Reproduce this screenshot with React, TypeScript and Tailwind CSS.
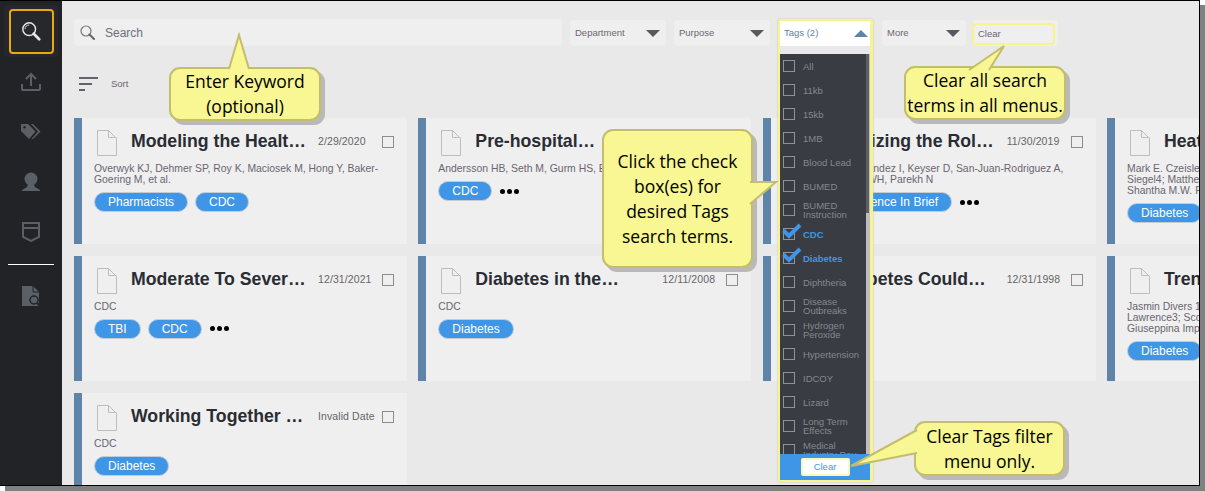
import React from "react";

const FONT = "font-['Liberation_Sans',Arial,sans-serif]";

function DocIcon() {
  return (
    <svg width="20" height="26" viewBox="0 0 20 26" className="ml-[3px] shrink-0">
      <path d="M.5.5H11.5L19.5 8.5V25.5H.5Z M11.5.5V7.5H19.5" fill="none" stroke="#bdbdbd" strokeWidth="1" />
    </svg>
  );
}

function Pill({ children, className = "" }: { children: React.ReactNode; className?: string }) {
  return (
    <span className={`inline-flex h-[20px] items-center rounded-full border border-[#c4ccd4] bg-[#3f96e6] px-[13px] text-[12px] text-white whitespace-nowrap ${className}`}>
      {children}
    </span>
  );
}

function Dots() {
  return (
    <span className="ml-[1px] flex gap-[2px]">
      <i className="block h-[5px] w-[5px] rounded-full bg-black" />
      <i className="block h-[5px] w-[5px] rounded-full bg-black" />
      <i className="block h-[5px] w-[5px] rounded-full bg-black" />
    </span>
  );
}

type CardData = { title: string; date: string; meta: string[]; pills: string[]; dots?: boolean };

function Card({ title, date, meta, pills, dots }: CardData) {
  return (
    <div className="flex h-[125.5px] w-[333px] shrink-0 border-l-[8px] border-[#5f84a9] bg-[#efefef] pl-[12px] pr-[12px] pt-[12px]">
      <div className="w-full min-w-0">
        <div className="flex h-[26px] items-start">
          <DocIcon />
          <div className="ml-[14px] w-[187px] shrink-0 whitespace-nowrap text-[17.7px] leading-[23px] font-bold text-[#2a2c33]">{title}</div>
          <div className="w-[60px] shrink-0 whitespace-nowrap pt-[4px] text-[10.5px] leading-[14px] tracking-[0.1px] text-[#666]">{date}</div>
          <div className="mt-[6px] ml-auto mr-[1px] h-[12px] w-[12px] shrink-0 border border-[#8c8c8c]" />
        </div>
        <div className="mt-[7px] w-[300px] text-[10.4px] leading-[11px] whitespace-pre-line text-[#6b6570]">{meta.join("\n")}</div>
        <div className="mt-[7px] flex items-center gap-[7px]">
          {pills.map((p) => (
            <Pill key={p}>{p}</Pill>
          ))}
          {dots && <Dots />}
        </div>
      </div>
    </div>
  );
}

const cards: CardData[] = [
  { title: "Modeling the Healt…", date: "2/29/2020", meta: ["Overwyk KJ, Dehmer SP, Roy K, Maciosek M, Hong Y, Baker-", "Goering M, et al."], pills: ["Pharmacists", "CDC"] },
  { title: "Pre-hospital…", date: "1/1/2020", meta: ["Andersson HB, Seth M, Gurm HS, Et al."], pills: ["CDC"], dots: true },
  { title: "Optimizing the Rol…", date: "11/30/2019", meta: ["Berenbrok L, Hernandez I, Keyser D, San-Juan-Rodriguez A,", "Good CB, Shrank WH, Parekh N"], pills: ["Pharmacy Science In Brief"], dots: true },
  { title: "Heat and Diabetes", date: "", meta: ["Mark E. Czeisler; Rashon", "Siegel4; Matthew D. Weaver", "Shantha M.W. Rajaratnam"], pills: ["Diabetes"] },
  { title: "Moderate To Sever…", date: "12/31/2021", meta: ["CDC"], pills: ["TBI", "CDC"], dots: true },
  { title: "Diabetes in the…", date: "12/11/2008", meta: ["CDC"], pills: ["Diabetes"] },
  { title: "Is Diabetes Could…", date: "12/31/1998", meta: ["CDC"], pills: ["Diabetes"] },
  { title: "Trends in Care", date: "", meta: ["Jasmin Divers 1; Sharon", "Lawrence3; Scott Isom", "Giuseppina Imperatore"], pills: ["Diabetes"] },
  { title: "Working Together …", date: "Invalid Date", meta: ["CDC"], pills: ["Diabetes"] },
];

const tags = ["All", "11kb", "15kb", "1MB", "Blood Lead", "BUMED", "BUMED Instruction", "CDC", "Diabetes", "Diphtheria", "Disease Outbreaks", "Hydrogen Peroxide", "Hypertension", "IDCOY", "Lizard", "Long Term Effects", "Medical Industry Day"];

function Caret({ up = false, color = "#555a60" }: { up?: boolean; color?: string }) {
  return (
    <svg width="14" height="7" viewBox="0 0 14 7" className="shrink-0">
      <path d={up ? "M0 7L7 0L14 7Z" : "M0 0H14L7 7Z"} fill={color} />
    </svg>
  );
}

function Filter({ label, className }: { label: string; className: string }) {
  return (
    <div className={`flex h-[26px] items-center justify-between rounded-[4px] bg-[#efefef] pl-[5px] pr-[6px] text-[9.5px] text-[#6d6670] ${className}`}>
      <span>{label}</span>
      <Caret />
    </div>
  );
}

function Callout({ className, lines, tail, tailClass, tailW, tailH }: { className: string; lines: string[]; tail: string; tailClass: string; tailW: number; tailH: number }) {
  return (
    <div className={`absolute z-30 flex flex-col items-center justify-center rounded-[11px] border-[2.5px] border-[#c3bd6c] bg-[#f8f793] text-center font-['Open_Sans',sans-serif] text-[17.5px] leading-[25px] text-black shadow-[4px_4px_0_#b9b9b9] ${className}`}>
      {lines.map((l) => (
        <div key={l} className="whitespace-nowrap">{l}</div>
      ))}
      <svg width={tailW} height={tailH} viewBox={`0 0 ${tailW} ${tailH}`} className={`absolute overflow-visible ${tailClass}`}>
        <path d={tail} fill="#f8f793" stroke="#c3bd6c" strokeWidth="2" strokeLinejoin="miter" />
      </svg>
    </div>
  );
}

function SideIcon({ children }: { children: React.ReactNode }) {
  return <div className="flex h-[50px] items-center justify-center">{children}</div>;
}

function TagRow({ label }: { label: string }) {
  const checked = label === "CDC" || label === "Diabetes";
  return (
    <div className="relative flex h-[24px] shrink-0 items-center pl-[3px]">
      <span className="h-[12px] w-[12px] shrink-0 border border-[#8f9296]" />
      {checked && (
        <svg width="22" height="18" viewBox="0 0 22 18" className="absolute left-0 top-0">
          <path d="M3.5 8.5L9 14L20 3" fill="none" stroke="#3f96e6" strokeWidth="4" />
        </svg>
      )}
      <span className={`ml-[8px] text-[9.5px] leading-[9px] ${checked ? "font-bold text-[#3f96e6]" : "text-[#85888c]"}`}>{label}</span>
    </div>
  );
}

export default function App() {
  return (
    <div className={`h-[491px] w-[1205px] overflow-hidden bg-white ${FONT}`}>
      <div className="relative flex h-[486px] w-[1200px] overflow-hidden border-t border-r border-b border-black bg-[#e9e9e9] shadow-[5px_5px_0_#808080]">
        <aside className="flex w-[62px] shrink-0 flex-col items-center bg-[#212327] pt-[4px]">
          <div className="flex h-[52px] w-[54px] items-center justify-center rounded-[4px] bg-[#26282d]">
            <div className="flex h-[45px] w-[45px] items-center justify-center rounded-[4px] border-[2.5px] border-[#e7a90f] bg-[#26282c]">
              <svg width="20" height="20" viewBox="0 0 22 22">
                <circle cx="9" cy="9" r="7" fill="none" stroke="#e6e6e6" strokeWidth="1.6" />
                <path d="M4.5 9a4.5 4.5 0 0 1 4.5-4.5" fill="none" stroke="#e6e6e6" strokeWidth="1" />
                <path d="M14 14L20 20" stroke="#e6e6e6" strokeWidth="3" strokeLinecap="round" />
              </svg>
            </div>
          </div>
          <SideIcon>
            <svg width="20" height="20" viewBox="0 0 20 20" fill="none" stroke="#5b6066" strokeWidth="2">
              <path d="M1 12V17a1 1 0 0 0 1 1H18a1 1 0 0 0 1-1V12" />
              <path d="M10 14V2M5 7L10 2L15 7" />
            </svg>
          </SideIcon>
          <SideIcon>
            <svg width="20" height="18" viewBox="0 0 20 18" fill="#5b6066">
              <path fillRule="evenodd" d="M0 1H7L14.5 8.5L8 16L0 8ZM3.5 3a1.3 1.3 0 1 0 .01 0Z" />
              <path d="M10 1H12L19.5 8.5L12 16H10.5L17 8.5Z" />
            </svg>
          </SideIcon>
          <SideIcon>
            <svg width="18" height="20" viewBox="0 0 18 20" fill="#5b6066">
              <circle cx="9" cy="7" r="6.5" />
              <path d="M6 12H12L13 15L18 18V19H0V18L5 15Z" />
            </svg>
          </SideIcon>
          <SideIcon>
            <svg width="18" height="20" viewBox="0 0 18 20" fill="none" stroke="#5b6066" strokeWidth="2">
              <path d="M1 1H17V15L9 19L1 15Z" />
              <path d="M1 6H17" />
            </svg>
          </SideIcon>
          <div className="mt-[7px] h-[1px] w-[46px] bg-white" />
          <div className="mt-[21px]">
            <svg width="18" height="21" viewBox="0 0 18 21">
              <path d="M0 0H11L17 6V20H0Z" fill="#5b6066" />
              <path d="M11 0V6H17" fill="none" stroke="#212327" strokeWidth="1" />
              <circle cx="12" cy="14" r="4" fill="#5b6066" stroke="#212327" strokeWidth="1.5" />
              <path d="M15 17L18 20" stroke="#212327" strokeWidth="2" />
            </svg>
          </div>
        </aside>

        <main className="min-w-0 flex-1 pl-[12px] pt-[18px]">
          <div className="flex h-[28px] items-start gap-[8px]">
            <div className="flex h-[27px] w-[488px] items-center rounded-[4px] bg-[#efefef] pl-[6px] text-[12px] text-[#6d7078]">
              <svg width="15" height="15" viewBox="0 0 15 15" className="shrink-0">
                <circle cx="6" cy="6" r="5" fill="none" stroke="#777" strokeWidth="1.2" />
                <path d="M9.5 9.5L14 14" stroke="#666" strokeWidth="2" strokeLinecap="round" />
              </svg>
              <span className="ml-[10px]">Search</span>
            </div>
            <Filter label="Department" className="mt-[1px] w-[96px]" />
            <Filter label="Purpose" className="mt-[1px] w-[96px]" />
            <div className="w-[96px] shrink-0" />
            <Filter label="More" className="mt-[1px] w-[84px]" />
            <div className="mt-[1px] ml-[-1px] h-[26px] w-[85px] rounded-[4px] bg-[#efefef] pt-[3px]">
              <div className="ml-[-1px] flex h-[22px] w-[83px] items-center rounded-[4px] border-[2px] border-[#f7f58a] pl-[4px] text-[9.5px] text-[#6d6670]">Clear</div>
            </div>
          </div>

          <div className="mt-[27px] flex h-[20px] items-center pl-[5px]">
            <svg width="19" height="14" viewBox="0 0 19 14" stroke="#60646b" strokeWidth="2">
              <path d="M0 1H19M0 7H13M0 13H6" />
            </svg>
            <span className="ml-[13px] text-[9.5px] text-[#6d6670]">Sort</span>
          </div>

          <div className="mt-[24px] flex w-[1400px] flex-wrap gap-x-[11.33px] gap-y-[12px]">
            {cards.map((c) => (
              <Card key={c.title} {...c} />
            ))}
          </div>
        </main>

        {/* Tags dropdown overlay */}
        <div className="absolute left-[778px] top-[18px] z-20 flex h-[463px] w-[95px] flex-col rounded-[3px] border-[2px] border-r-[3px] border-[#f7f58a] shadow-[0_0_2px_#bbb]">
          <div className="flex h-[25px] shrink-0 items-center justify-between bg-white pl-[4px] pr-[2px] text-[9.5px] text-[#5f7f9f]">
            <span>Tags (2)</span>
            <Caret up color="#5f84a9" />
          </div>
          <div className="h-[8px] shrink-0" />
          <div className="flex min-h-0 flex-1 overflow-hidden">
            <div className="min-h-0 flex-1 overflow-hidden bg-[#393c43]">
              <div className="flex flex-col">
                {tags.map((t) => (
                  <TagRow key={t} label={t} />
                ))}
              </div>
            </div>
            <div className="w-[4px] shrink-0 bg-[#bdbdbd]">
              <div className="h-[159px] w-[3px] bg-[#5c5f64]" />
            </div>
          </div>
          <div className="flex h-[26px] shrink-0 items-center justify-center bg-[#3f96e6]">
            <div className="flex h-[18px] w-[49px] items-center justify-center rounded-[2px] border-[2px] border-[#f7f7c0] bg-white text-[9.5px] text-[#3f96e6]">Clear</div>
          </div>
        </div>

        <Callout
          className="left-[169px] top-[66px] h-[54px] w-[152px]"
          lines={["Enter Keyword", "(optional)"]}
          tail="M0 34L10 0L20 34"
          tailClass="left-[58px] top-[-34px]"
          tailW={20}
          tailH={34}
        />
        <Callout
          className="left-[904px] top-[65px] h-[54px] w-[162px]"
          lines={["Clear all search", "terms in all menus."]}
          tail="M0 24L35 0L20 24"
          tailClass="left-[63px] top-[-22px]"
          tailW={35}
          tailH={24}
        />
        <Callout
          className="left-[602px] top-[128px] h-[139px] w-[151px]"
          lines={["Click the check", "box(es) for", "desired Tags", "search terms."]}
          tail="M0 0L26 0L0 22"
          tailClass="left-[146px] top-[51px]"
          tailW={26}
          tailH={22}
        />
        <Callout
          className="left-[914px] top-[420px] h-[55px] w-[151px]"
          lines={["Clear Tags filter", "menu only."]}
          tail="M66 0L0 36L66 23"
          tailClass="left-[-65px] top-[7px]"
          tailW={66}
          tailH={38}
        />
      </div>
    </div>
  );
}
